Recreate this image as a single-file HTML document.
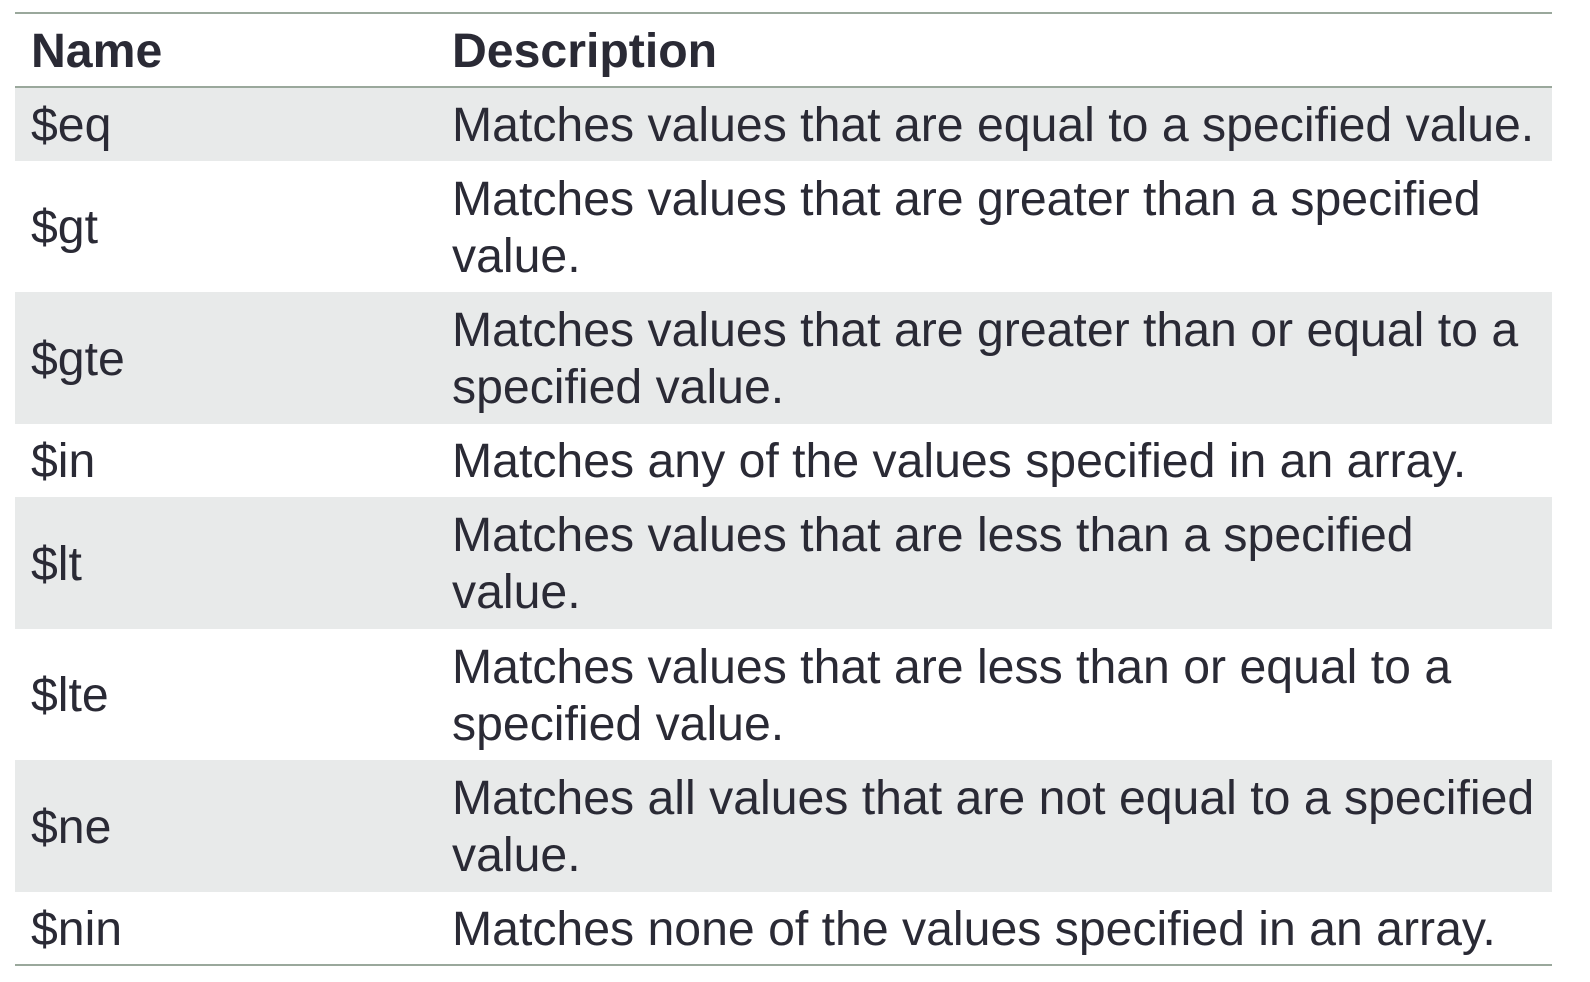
<!DOCTYPE html>
<html><head><style>
html,body{margin:0;padding:0;background:#fff;width:1590px;height:982px;overflow:hidden}
body{font-family:"Liberation Sans",Arial,sans-serif;color:#2a2a35}
.t{position:absolute;left:15px;top:12px;width:1537px;border-top:2px solid #9aa89c;border-bottom:2px solid #9aa89c}
.r{display:flex;align-items:center;font-size:48.2px;line-height:57px;box-sizing:border-box;white-space:nowrap}
.r.h{font-weight:bold;height:74px;border-bottom:2px solid #9aa89c}
.g{background:#e8eaea}
.n{width:437px;padding-left:16px;box-sizing:border-box;flex:none;padding-top:2px}
.d{flex:1;padding-top:2px}
</style></head><body>
<div class="t">
<div class="r h"><div class="n">Name</div><div class="d">Description</div></div>
<div class="r g" style="height:73px"><div class="n">$eq</div><div class="d">Matches values that are equal to a specified value.</div></div>
<div class="r" style="height:131px"><div class="n">$gt</div><div class="d">Matches values that are greater than a specified<br>value.</div></div>
<div class="r g" style="height:132px"><div class="n">$gte</div><div class="d">Matches values that are greater than or equal to a<br>specified value.</div></div>
<div class="r" style="height:73px"><div class="n">$in</div><div class="d">Matches any of the values specified in an array.</div></div>
<div class="r g" style="height:132px"><div class="n">$lt</div><div class="d">Matches values that are less than a specified<br>value.</div></div>
<div class="r" style="height:131px"><div class="n">$lte</div><div class="d">Matches values that are less than or equal to a<br>specified value.</div></div>
<div class="r g" style="height:132px"><div class="n">$ne</div><div class="d">Matches all values that are not equal to a specified<br>value.</div></div>
<div class="r" style="height:72px"><div class="n">$nin</div><div class="d">Matches none of the values specified in an array.</div></div>
</div>
</body></html>
